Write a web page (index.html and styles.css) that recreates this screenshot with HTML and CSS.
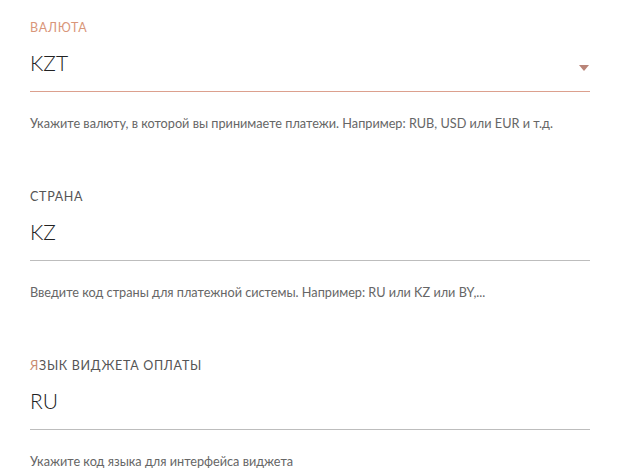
FILE: index.html
```html
<!DOCTYPE html>
<html lang="ru">
<head>
    <meta charset="UTF-8">
    <title>Настройки оплаты</title>
    <link rel="stylesheet" href="styles.css">
</head>
<body>
    <div class="settings">
        <div class="field focused">
            <label class="field-label">Валюта</label>
            <div class="field-input">
                <span class="field-value">KZT</span>
                <span class="select-arrow"></span>
            </div>
            <p class="field-help">Укажите валюту, в которой вы принимаете платежи. Например: RUB, USD или EUR и т.д.</p>
        </div>

        <div class="field">
            <label class="field-label">Страна</label>
            <div class="field-input">
                <span class="field-value">KZ</span>
            </div>
            <p class="field-help">Введите код страны для платежной системы. Например: RU или KZ или BY,...</p>
        </div>

        <div class="field">
            <label class="field-label"><span class="first-letter">Я</span>зык виджета оплаты</label>
            <div class="field-input">
                <span class="field-value">RU</span>
            </div>
            <p class="field-help">Укажите код языка для интерфейса виджета</p>
        </div>
    </div>
</body>
</html>
```

FILE: styles.css
```css
body {
    margin: 0;
    background: #fff;
    font-family: Lato, "Open Sans", sans-serif;
}
.settings {
    padding: 20px 29px 0 30px;
}
.field {
    margin-bottom: 58px;
}
.field-label {
    display: block;
    font-size: 12.5px;
    letter-spacing: 0.7px;
    text-transform: uppercase;
    color: #555;
    line-height: 16px;
}
.field-label .first-letter {
    color: #c98b70;
}
.field-input {
    display: flex;
    align-items: center;
    justify-content: space-between;
    height: 56px;
    padding: 14px 0 16px;
    border-bottom: 1px solid #bdbdbd;
    box-sizing: border-box;
}
.field-value {
    font-size: 21px;
    font-weight: 300;
    line-height: 26px;
    color: #222;
}
.select-arrow {
    width: 0;
    height: 0;
    margin: 10px 1px 0 0;
    border-left: 5px solid transparent;
    border-right: 5px solid transparent;
    border-top: 6px solid #b98478;
}
.field-help {
    margin: 23px 0 0;
    font-size: 12.7px;
    color: #666;
    line-height: 16px;
}
.focused .field-label {
    color: #d9967a;
}
.focused .field-input {
    border-bottom-color: #dca08e;
}
```
